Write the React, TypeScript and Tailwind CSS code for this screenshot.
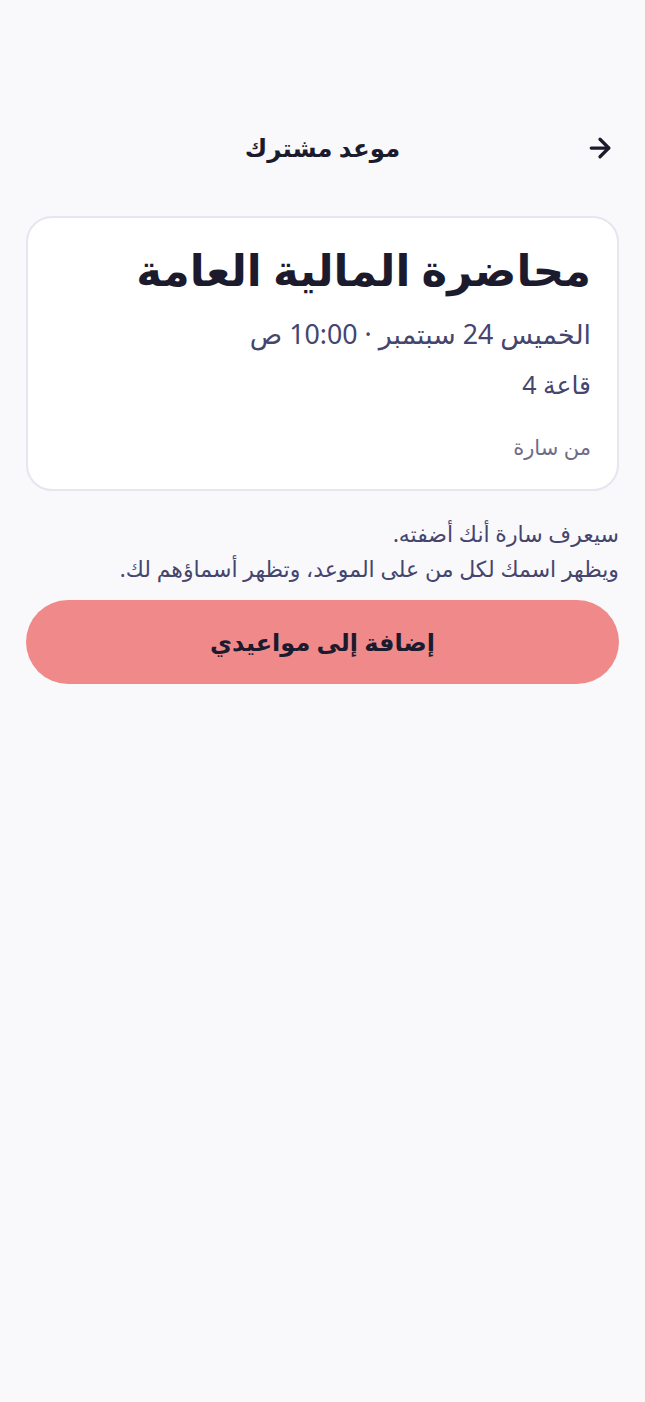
import { ArrowRight } from "lucide-react";

export default function App() {
  return (
    <div
      dir="rtl"
      className="min-h-[1402px] w-full bg-[#f9f9fc] pt-[114px] text-[#1c1b2e]"
      style={{ fontFamily: '"Noto Sans", "DejaVu Sans", sans-serif' }}
    >
      {/* Header */}
      <div className="relative flex h-[68px] items-center px-[26px]">
        <button type="button" className="absolute right-[30px] text-[#1c1b2e]">
          <ArrowRight size={30} strokeWidth={2.6} />
        </button>
        <h1 className="flex-1 text-center text-[24.5px] font-bold">موعد مشترك</h1>
      </div>

      <main className="px-[26px] pt-[34px]">
        {/* Card */}
        <div className="rounded-[26px] border-2 border-[#e6e5f0] bg-white px-[26px] pt-[16px] pb-[26px]">
          <h2 className="text-[43.5px] font-bold leading-[70px] text-[#1c1b2e]">محاضرة المالية العامة</h2>
          <p className="mt-[12px] text-[26.8px] leading-[36px] text-[#45456e]">الخميس 24 سبتمبر · 10:00 ص</p>
          <p className="mt-[14px] text-[25px] leading-[36px] text-[#45456e]">قاعة 4</p>
          <p className="mt-[29px] text-[21px] leading-[32px] text-[#6e6d87]">من سارة</p>
        </div>

        {/* Note */}
        <div className="mt-[25px] text-[22px] leading-[35px] text-[#45456e]">
          <p>سيعرف سارة أنك أضفته.</p>
          <p>ويظهر اسمك لكل من على الموعد، وتظهر أسماؤهم لك.</p>
        </div>

        <button
          type="button"
          className="mt-[14px] flex h-[84px] w-full items-center justify-center rounded-full bg-[#f08a8a] text-[24px] font-bold text-[#1c1b2e]"
        >
          إضافة إلى مواعيدي
        </button>
      </main>
    </div>
  );
}
